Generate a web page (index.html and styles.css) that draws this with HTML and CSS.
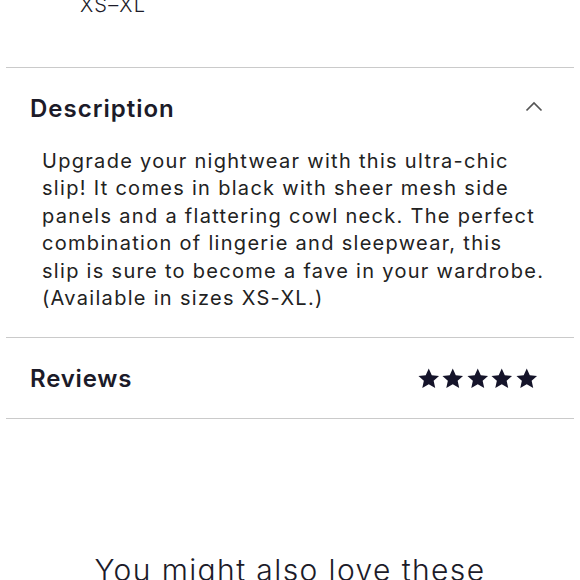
FILE: index.html
```html
<!DOCTYPE html>
<html lang="en">
<head>
  <meta charset="UTF-8">
  <title>Product details</title>
  <meta name="viewport" content="width=device-width, initial-scale=1.0">
  <link rel="stylesheet" href="styles.css">
</head>
<body>
  <div class="sizes">XS–XL</div>

  <section class="panel">
    <div class="panel-head">
      <h2>Description</h2>
      <svg class="chevron" width="18" height="11" viewBox="0 0 18 11">
        <path d="M1.5 9.5 L9 2 L16.5 9.5" fill="none" stroke="#555" stroke-width="1.7"/>
      </svg>
    </div>
    <p class="desc">Upgrade your nightwear with this ultra-chic<br>
      slip! It comes in black with sheer mesh side<br>
      panels and a flattering cowl neck. The perfect<br>
      combination of lingerie and sleepwear, this<br>
      slip is sure to become a fave in your wardrobe.<br>
      (Available in sizes XS-XL.)</p>
  </section>

  <section class="panel">
    <div class="panel-head reviews">
      <h2>Reviews</h2>
      <div class="stars">
        <svg viewBox="0 0 24 24"><path d="M12 1.5l3.1 6.8 7.4.8-5.5 5 1.6 7.3L12 17.7l-6.6 3.7 1.6-7.3-5.5-5 7.4-.8z"/></svg>
        <svg viewBox="0 0 24 24"><path d="M12 1.5l3.1 6.8 7.4.8-5.5 5 1.6 7.3L12 17.7l-6.6 3.7 1.6-7.3-5.5-5 7.4-.8z"/></svg>
        <svg viewBox="0 0 24 24"><path d="M12 1.5l3.1 6.8 7.4.8-5.5 5 1.6 7.3L12 17.7l-6.6 3.7 1.6-7.3-5.5-5 7.4-.8z"/></svg>
        <svg viewBox="0 0 24 24"><path d="M12 1.5l3.1 6.8 7.4.8-5.5 5 1.6 7.3L12 17.7l-6.6 3.7 1.6-7.3-5.5-5 7.4-.8z"/></svg>
        <svg viewBox="0 0 24 24"><path d="M12 1.5l3.1 6.8 7.4.8-5.5 5 1.6 7.3L12 17.7l-6.6 3.7 1.6-7.3-5.5-5 7.4-.8z"/></svg>
      </div>
    </div>
  </section>
  <div class="rule"></div>

  <h3 class="also">You might also love these</h3>
</body>
</html>
```

FILE: styles.css
```css
:root {
  --ink: #1c1b29;
  --line: #cacaca;
}

* {
  box-sizing: border-box;
}

body {
  margin: 0;
  font-family: 'Inter', 'Open Sans', sans-serif;
  color: var(--ink);
  background: #fff;
  overflow: hidden;
}

.sizes {
  margin-top: -7px;
  padding-left: 80px;
  height: 74px;
  font-size: 20px;
  font-weight: 300;
  letter-spacing: 1.2px;
  line-height: 24px;
}

.panel {
  margin: 0 6px;
  border-top: 1.5px solid var(--line);
}

.rule {
  margin: 0 6px;
  border-top: 1.5px solid var(--line);
}

.panel-head {
  display: flex;
  justify-content: space-between;
  align-items: center;
  padding: 0 30px 0 24px;
  height: 80px;
}

.panel-head h2 {
  margin: 0;
  font-size: 24px;
  font-weight: 600;
  letter-spacing: 1px;
}

.reviews h2 {
  letter-spacing: 0.8px;
}

.chevron {
  margin-top: -4px;
  margin-right: 1px;
}

.desc {
  margin: 0;
  padding: 0 10px 25px 36px;
  font-size: 20px;
  font-weight: 400;
  line-height: 27.4px;
  letter-spacing: 1.3px;
  white-space: nowrap;
  color: #222;
}

.reviews {
  padding-right: 36px;
}

.stars {
  display: flex;
  gap: 1px;
}

.stars svg {
  width: 23.5px;
  height: 23.5px;
  fill: #15142a;
}

.also {
  margin: 133px 0 0;
  text-align: center;
  font-size: 30px;
  font-weight: 300;
  letter-spacing: 1.4px;
}
```
